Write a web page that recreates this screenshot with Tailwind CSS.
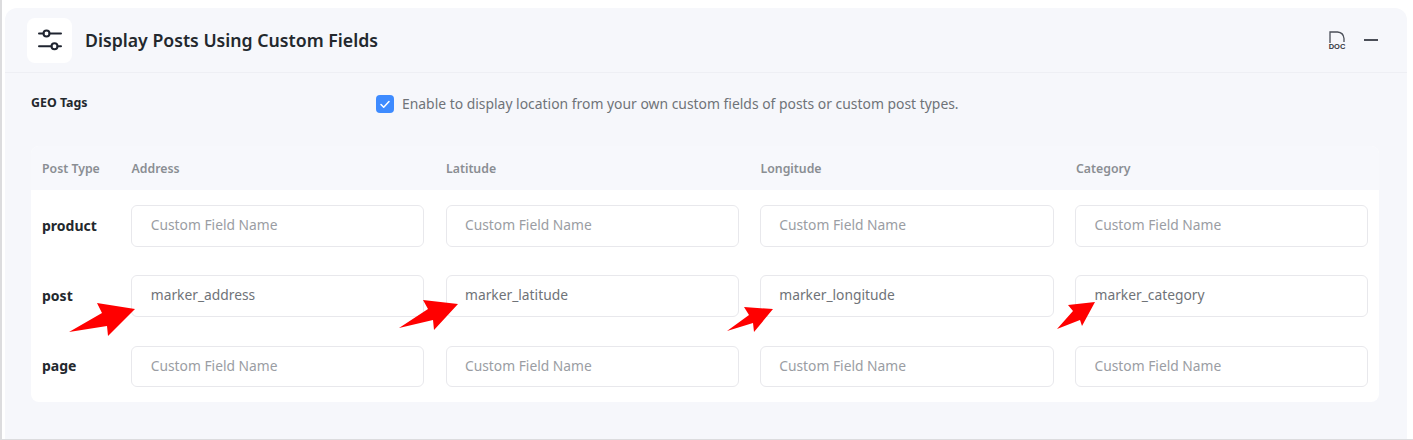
<!DOCTYPE html>
<html><head><meta charset="utf-8"><script src="https://cdn.jsdelivr.net/npm/@tailwindcss/browser@4"></script></head>
<body class="bg-white">
<div class="relative h-[440px] w-[1413px] overflow-hidden bg-white font-['Noto_Sans',sans-serif]">
  <div class="absolute left-0 top-0 h-full w-[2px] bg-[#dcdcde]"></div>
  <div class="absolute bottom-0 left-0 h-px w-full bg-[#dcdcde]"></div>
  <div class="ml-[5px] mt-2 h-[431px] w-[1402px] rounded-t-xl bg-[#f6f7fb]">
    <header class="flex h-[65px] items-center justify-between border-b border-[#eeeff4] pl-[22px] pr-[29px]">
      <div class="flex items-center gap-[13px]">
        <div class="flex h-[45px] w-[45px] items-center justify-center rounded-lg bg-white">
          <svg class="h-6 w-6" viewBox="0 0 24 24" fill="none" stroke="#1f2430" stroke-width="2" stroke-linecap="round"><circle cx="8.5" cy="5.5" r="3"/><path d="M1 5.5h4.5M11.5 5.5H23M1 18.2h12.5M19.5 18.2H23"/><circle cx="16.5" cy="18.2" r="3"/></svg>
        </div>
        <h2 class="text-[17.7px] font-semibold text-[#23282d]">Display Posts Using Custom Fields</h2>
      </div>
      <div class="flex items-center gap-[18px]">
        <div class="flex w-[18px] flex-col items-center">
          <svg class="h-[12px] w-[16px]" viewBox="0 0 16 12" fill="none" stroke="#4b4f58" stroke-width="1.3"><path d="M1 12V1h7.5q6 .5 6.5 6.5V11"/></svg>
          <span class="mt-[1px] font-['Liberation_Sans',sans-serif] text-[7.5px] font-bold leading-[6px] text-[#33363d]">DOC</span>
        </div>
        <div class="h-[1.5px] w-[14px] bg-[#4b4f58]"></div>
      </div>
    </header>
    <div class="relative flex h-[73px] pl-[26px]">
      <div class="mt-[22px] w-[345px] text-[12.4px] font-bold leading-4 text-[#23282d]">GEO Tags</div>
      <label class="mt-[22px] flex h-[18px] items-center gap-2">
        <span class="flex h-[18px] w-[18px] items-center justify-center rounded-[4px] bg-[#3e8bff]">
          <svg class="h-3 w-3" viewBox="0 0 12 12" fill="none" stroke="#fff" stroke-width="1.5" stroke-linecap="round" stroke-linejoin="round"><path d="M2 6.5l2.7 2.7L10 3.5"/></svg>
        </span>
        <span class="text-[13.9px] text-[#6f7378]">Enable to display location from your own custom fields of posts or custom post types.</span>
      </label>
    </div>
    <div class="ml-[26px] w-[1348px] overflow-hidden rounded-lg bg-white">
      <div class="grid h-11 grid-cols-[68px_293px_293px_294px_293px] items-center gap-x-[21.5px] bg-[#f7f8fc] pl-[11px] pt-[2px] text-[12.3px] font-semibold text-[#8a8e93]">
        <span class="whitespace-nowrap">Post Type</span><span>Address</span><span>Latitude</span><span>Longitude</span><span>Category</span>
      </div>
      <div class="grid grid-cols-[68px_293px_293px_294px_293px] items-center gap-x-[21.25px] gap-y-[28px] pl-[11px] pt-[15px] pb-[15px] text-[13.8px]">
        <span class="-mt-px text-[14px] font-bold text-[#23282d]">product</span>
        <div class="flex h-[42px] items-center rounded-md border border-[#e8e8ec] pb-px pl-[18.5px] text-[#9a9da3]">Custom Field Name</div>
        <div class="flex h-[42px] items-center rounded-md border border-[#e8e8ec] pb-px pl-[18.5px] text-[#9a9da3]">Custom Field Name</div>
        <div class="flex h-[42px] items-center rounded-md border border-[#e8e8ec] pb-px pl-[18.5px] text-[#9a9da3]">Custom Field Name</div>
        <div class="flex h-[42px] items-center rounded-md border border-[#e8e8ec] pb-px pl-[18.5px] text-[#9a9da3]">Custom Field Name</div>
        <span class="-mt-px text-[14px] font-bold text-[#23282d]">post</span>
        <div class="flex h-[42px] items-center rounded-md border border-[#e8e8ec] pb-px pl-[18.5px] text-[#6f7378]">marker_address</div>
        <div class="flex h-[42px] items-center rounded-md border border-[#e8e8ec] pb-px pl-[18.5px] text-[#6f7378]">marker_latitude</div>
        <div class="flex h-[42px] items-center rounded-md border border-[#e8e8ec] pb-px pl-[18.5px] text-[#6f7378]">marker_longitude</div>
        <div class="flex h-[42px] items-center rounded-md border border-[#e8e8ec] pb-px pl-[18.5px] text-[#6f7378]">marker_category</div>
        <span class="-mt-px text-[14px] font-bold text-[#23282d]">page</span>
        <div class="mt-px flex h-[41px] items-center rounded-md border border-[#e8e8ec] pl-[18.5px] text-[#9a9da3]">Custom Field Name</div>
        <div class="mt-px flex h-[41px] items-center rounded-md border border-[#e8e8ec] pl-[18.5px] text-[#9a9da3]">Custom Field Name</div>
        <div class="mt-px flex h-[41px] items-center rounded-md border border-[#e8e8ec] pl-[18.5px] text-[#9a9da3]">Custom Field Name</div>
        <div class="mt-px flex h-[41px] items-center rounded-md border border-[#e8e8ec] pl-[18.5px] text-[#9a9da3]">Custom Field Name</div>
      </div>
    </div>
  </div>
  <svg class="pointer-events-none absolute left-0 top-0" width="1413" height="440" fill="#ff0000">
    <polygon points="69,332 102,313 97,303 135,309 108,336 107,326"/>
    <polygon points="399,328 428,309 423,300 458,304 434,330 433,320"/>
    <polygon points="727,331 749,315 744,307 773,309 754,332 753,323"/>
    <polygon points="1057,329 1073,311 1068,305 1095,302 1082,326 1080,320"/>
  </svg>
</div>
</body></html>
